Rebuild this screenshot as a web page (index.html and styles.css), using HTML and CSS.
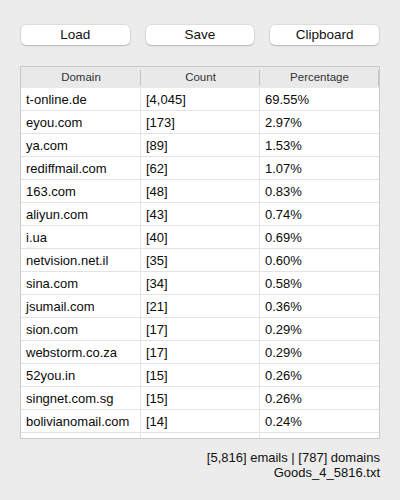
FILE: index.html
```html
<!DOCTYPE html>
<html>
<head>
<meta charset="utf-8">
<link rel="stylesheet" href="styles.css">
</head>
<body>
<div class="app">
  <div class="toolbar">
    <button class="btn">Load</button>
    <button class="btn">Save</button>
    <button class="btn">Clipboard</button>
  </div>
  <div class="table">
    <div class="head">
      <div class="hcell">Domain</div>
      <div class="hcell">Count</div>
      <div class="hcell">Percentage</div>
    </div>
    <div class="body">
      <div class="row"><div class="cell">t-online.de</div><div class="cell">[4,045]</div><div class="cell">69.55%</div></div>
      <div class="row"><div class="cell">eyou.com</div><div class="cell">[173]</div><div class="cell">2.97%</div></div>
      <div class="row"><div class="cell">ya.com</div><div class="cell">[89]</div><div class="cell">1.53%</div></div>
      <div class="row"><div class="cell">rediffmail.com</div><div class="cell">[62]</div><div class="cell">1.07%</div></div>
      <div class="row"><div class="cell">163.com</div><div class="cell">[48]</div><div class="cell">0.83%</div></div>
      <div class="row"><div class="cell">aliyun.com</div><div class="cell">[43]</div><div class="cell">0.74%</div></div>
      <div class="row"><div class="cell">i.ua</div><div class="cell">[40]</div><div class="cell">0.69%</div></div>
      <div class="row"><div class="cell">netvision.net.il</div><div class="cell">[35]</div><div class="cell">0.60%</div></div>
      <div class="row"><div class="cell">sina.com</div><div class="cell">[34]</div><div class="cell">0.58%</div></div>
      <div class="row"><div class="cell">jsumail.com</div><div class="cell">[21]</div><div class="cell">0.36%</div></div>
      <div class="row"><div class="cell">sion.com</div><div class="cell">[17]</div><div class="cell">0.29%</div></div>
      <div class="row"><div class="cell">webstorm.co.za</div><div class="cell">[17]</div><div class="cell">0.29%</div></div>
      <div class="row"><div class="cell">52you.in</div><div class="cell">[15]</div><div class="cell">0.26%</div></div>
      <div class="row"><div class="cell">singnet.com.sg</div><div class="cell">[15]</div><div class="cell">0.26%</div></div>
      <div class="row"><div class="cell">bolivianomail.com</div><div class="cell">[14]</div><div class="cell">0.24%</div></div>
      <div class="row"><div class="cell"></div><div class="cell"></div><div class="cell"></div></div>
    </div>
  </div>
  <div class="footer">
    <div>[5,816] emails | [787] domains</div>
    <div>Goods_4_5816.txt</div>
  </div>
</div>
</body>
</html>
```
FILE: styles.css
```css
html, body {
  margin: 0;
  padding: 0;
  background: #ececec;
}
body {
  font-family: "Liberation Sans", Arial, sans-serif;
  color: #111111;
  width: 400px;
  height: 500px;
  overflow: hidden;
}
.app {
  padding: 25px 21px 0 20px;
  display: flex;
  flex-direction: column;
}
.toolbar {
  display: flex;
  gap: 16px;
  padding-left: 1px;
}
.btn {
  width: 109px;
  height: 20px;
  border: none;
  border-radius: 5px;
  background: #ffffff;
  box-shadow: 0 0 0 0.5px rgba(0, 0, 0, 0.12), 0 1px 1.5px rgba(0, 0, 0, 0.18);
  font-family: "Liberation Sans", Arial, sans-serif;
  font-size: 13.5px;
  color: #111111;
  padding: 0;
  line-height: 20px;
}
.table {
  margin-top: 21px;
  width: 358px;
  border: 1px solid #c9c9c9;
  background: #ffffff;
}
.head {
  display: grid;
  grid-template-columns: 120px 119px 119px;
  height: 21px;
  background: #e9e9e9;
}
.hcell {
  position: relative;
  font-size: 11.5px;
  color: #333333;
  text-align: center;
  line-height: 21px;
}
.hcell::after {
  content: "";
  position: absolute;
  right: 0;
  top: 3px;
  bottom: 2px;
  width: 1px;
  background: #c4c4c4;
}
.body {
  height: 350px;
  overflow: hidden;
}
.row {
  display: grid;
  grid-template-columns: 120px 119px 119px;
  height: 22px;
  border-bottom: 1px solid #e3e3e3;
}
.cell {
  font-size: 13px;
  line-height: 23px;
  padding-left: 5px;
  color: #0a0a0a;
  border-right: 1px solid #e3e3e3;
  white-space: nowrap;
  overflow: hidden;
}
.cell:last-child {
  border-right: none;
}
.footer {
  margin-top: 11px;
  text-align: right;
  font-size: 13px;
  line-height: 15px;
  color: #111111;
  width: 360px;
}
```
